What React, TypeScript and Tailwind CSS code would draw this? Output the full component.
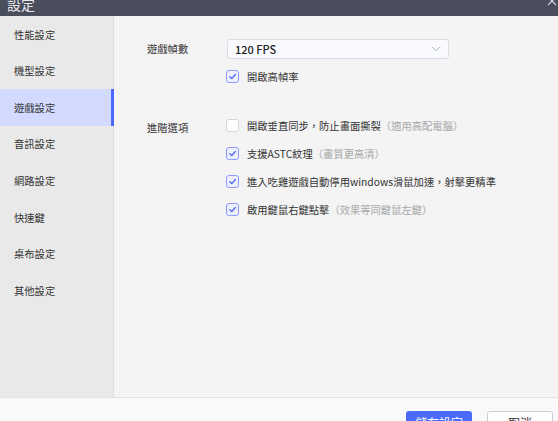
import { useState } from 'react';

const font = { fontFamily: '"Noto Sans CJK TC", "Noto Sans", sans-serif' };

const menu = ['性能設定', '機型設定', '遊戲設定', '音訊設定', '網路設定', '快速鍵', '桌布設定', '其他設定'];

function Check({ on }: { on: boolean }) {
  return (
    <span
      className={
        'w-[13px] h-[13px] rounded-[3px] border flex items-center justify-center shrink-0 ' +
        (on ? 'border-[#8f9cff] bg-[#eef0ff]' : 'border-[#d3d5de] bg-white')
      }
    >
      {on && (
        <svg width="9" height="9" viewBox="0 0 10 10" fill="none">
          <path d="M2 5.2 L4.2 7.3 L8.2 2.8" stroke="#4c66ff" strokeWidth="1.4" strokeLinecap="round" strokeLinejoin="round" />
        </svg>
      )}
    </span>
  );
}

export default function App() {
  const [active] = useState(2);
  const options = [
    { on: false, text: '開啟垂直同步，防止畫面撕裂', hint: '（適用高配電腦）' },
    { on: true, text: '支援ASTC紋理', hint: '（畫質更高清）' },
    { on: true, text: '進入吃雞遊戲自動停用windows滑鼠加速，射擊更精準', hint: '' },
    { on: true, text: '啟用鍵鼠右鍵點擊', hint: '（效果等同鍵鼠左鍵）' },
  ];

  return (
    <div className="w-[558px] h-[421px] flex flex-col overflow-hidden bg-[#f4f4f4] text-[#333]" style={font}>
      {/* title bar */}
      <div className="h-[16px] bg-[#4a4d5b] flex justify-between items-start shrink-0 overflow-hidden">
        <span className="text-[14px] leading-none text-[#e6e7ec] pl-[7px] -mt-[3px]">設定</span>
        <svg width="10" height="10" viewBox="0 0 10 10" className="mr-[1px] -mt-[4px]">
          <path d="M1 1 L9 9 M9 1 L1 9" stroke="#d8dae2" strokeWidth="1.1" />
        </svg>
      </div>

      <div className="flex flex-1 min-h-0">
        {/* sidebar */}
        <div className="w-[114px] bg-[#e9e9e9] border-r border-[#dedede] shrink-0">
          {menu.map((m, i) => (
            <div
              key={m}
              className={
                'h-[36.6px] flex items-center pl-[14px] text-[10.3px] ' +
                (i === active ? 'bg-[#d2dbff] border-r-[3px] border-[#4b68ff] -mr-px' : '')
              }
            >
              {m}
            </div>
          ))}
        </div>

        {/* content */}
        <div className="flex-1 pt-[24px] pl-[33px] text-[10.3px]">
          <div className="flex">
            <div className="w-[80px] pt-[1px]">遊戲幀數</div>
            <div className="flex flex-col gap-[10px]">
              <div className="w-[222px] h-[20px] -mt-[1px] rounded-[3px] border border-[#d9dce4] bg-[#f9fafd] flex items-center justify-between px-[7px]">
                <span className="text-[11px] font-medium text-[#222]">120 FPS</span>
                <svg width="10" height="6" viewBox="0 0 10 6">
                  <path d="M1 1 L5 4.5 L9 1" stroke="#b3b6c0" strokeWidth="1" fill="none" />
                </svg>
              </div>
              <label className="flex items-center gap-[8px] -ml-[1px]">
                <Check on />
                <span>開啟高幀率</span>
              </label>
            </div>
          </div>

          <div className="flex mt-[35px]">
            <div className="w-[80px] pt-[1px]">進階選項</div>
            <div className="flex flex-col gap-[15px] -ml-[1px]">
              {options.map((o) => (
                <label key={o.text} className="flex items-center gap-[8px] h-[13px]">
                  <Check on={o.on} />
                  <span>
                    {o.text}
                    {o.hint && <span className="text-[#a8a8a8]">{o.hint}</span>}
                  </span>
                </label>
              ))}
            </div>
          </div>
        </div>
      </div>

      {/* footer */}
      <div className="h-[24px] shrink-0 border-t border-[#e2e2e2] bg-[#f9f9f9] flex justify-end items-start gap-[15px] pr-[5px] pt-[13px]">
        <button className="w-[66px] h-[24px] rounded-[3px] bg-[#4b6bff] text-white text-[12px]">儲存設定</button>
        <button className="w-[66px] h-[24px] rounded-[3px] bg-white border border-[#c9ccd4] text-[#333] text-[12px]">取消</button>
      </div>
    </div>
  );
}
